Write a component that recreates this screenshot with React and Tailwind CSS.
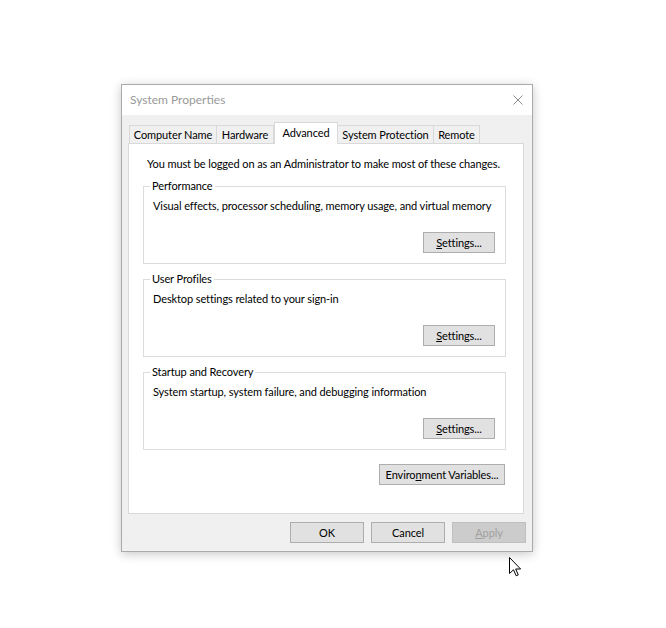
import React from "react";

const font = { fontFamily: 'Lato, "Noto Sans", sans-serif' };
const txt = "text-[11px] tracking-[-0.1px] text-black whitespace-nowrap";

function Btn({ children, className = "", disabled = false }) {
  return (
    <div
      className={
        "flex items-center justify-center h-[21px] border text-[11px] tracking-[-0.1px] leading-none whitespace-nowrap " +
        (disabled
          ? "bg-[#cccccc] border-[#bfbfbf] text-[#a0a0a0] "
          : "bg-[#e1e1e1] border-[#adadad] text-black ") +
        className
      }
    >
      {children}
    </div>
  );
}

function Group({ title, desc }) {
  return (
    <div className="relative mx-[14px] w-[363px] h-[78px] border border-[#dcdcdc] mt-[15px] first:mt-0">
      <div className={`absolute left-[6px] top-[-9px] bg-white px-[2px] leading-[16px] ${txt}`}>
        {title}
      </div>
      <div className={`pl-[9px] pt-[11px] leading-[16px] ${txt}`}>{desc}</div>
      <div className="absolute right-[10px] bottom-[10px]">
        <Btn className="w-[72px]">
          <span>
            <span className="underline">S</span>ettings...
          </span>
        </Btn>
      </div>
    </div>
  );
}

function Tab({ label, w, selected = false, first = false }) {
  if (selected) {
    return (
      <div
        className={`relative z-10 -mb-px h-[22px] ${w} bg-white border border-b-0 border-[#d9d9d9] flex items-start justify-center pt-[2px] leading-[16px] ${txt}`}
      >
        {label}
      </div>
    );
  }
  return (
    <div
      className={`h-[18px] ${w} ${first ? "" : "-ml-px"} bg-[#f0f0f0] border border-b-0 border-[#d9d9d9] flex items-center justify-center leading-[16px] ${txt}`}
    >
      {label}
    </div>
  );
}

export default function App() {
  return (
    <div className="relative w-[666px] h-[628px] bg-white pt-[84px] pl-[121px]" style={font}>
      <div className="w-[412px] h-[468px] border border-[#aaaaaa] bg-[#f0f0f0] shadow-[0_2px_10px_rgba(0,0,0,0.22)] flex flex-col">
        {/* title bar */}
        <div className="h-[30px] bg-white flex items-center justify-between pl-[8px] pr-[9px]">
          <span className="text-[12px] leading-none text-[#999999] whitespace-nowrap">System Properties</span>
          <svg width="10" height="10" viewBox="0 0 10 10" className="block">
            <path d="M0.5 0.5 L9.5 9.5 M9.5 0.5 L0.5 9.5" stroke="#8a8a8a" strokeWidth="1" fill="none" />
          </svg>
        </div>
        {/* body */}
        <div className="pt-[7px] pl-[6px]">
          <div className="flex items-end pl-[1px]">
            <Tab label="Computer Name" w="w-[88px]" first />
            <Tab label="Hardware" w="w-[58px]" />
            <Tab label="Advanced" w="w-[64px]" selected />
            <Tab label="System Protection" w="w-[97px]" />
            <Tab label="Remote" w="w-[47px]" />
          </div>
          <div className="w-[396px] h-[371px] bg-white border border-[#d9d9d9] flex flex-col">
            <div className={`pl-[18px] pt-[12px] leading-[16px] ${txt}`}>
              You must be logged on as an Administrator to make most of these changes.
            </div>
            <div className="mt-[14px] flex flex-col">
              <Group title="Performance" desc="Visual effects, processor scheduling, memory usage, and virtual memory" />
              <Group title="User Profiles" desc="Desktop settings related to your sign-in" />
              <Group title="Startup and Recovery" desc="System startup, system failure, and debugging information" />
            </div>
            <div className="flex justify-end pr-[18px] mt-[14px]">
              <Btn className="w-[126px]">
                <span>
                  Enviro<span className="underline">n</span>ment Variables...
                </span>
              </Btn>
            </div>
          </div>
          <div className="flex justify-end gap-[7px] pr-[6px] mt-[8px]">
            <Btn className="w-[74px]">OK</Btn>
            <Btn className="w-[74px]">Cancel</Btn>
            <Btn className="w-[74px]" disabled>
              <span>
                <span className="underline">A</span>pply
              </span>
            </Btn>
          </div>
        </div>
      </div>
      {/* mouse cursor */}
      <svg
        className="absolute left-[509px] top-[557px]"
        width="13"
        height="20"
        viewBox="0 0 13 20"
      >
        <path
          d="M0.5 0.5 L0.5 16.5 L4.5 12.8 L7.2 18.8 L9.3 17.9 L6.7 12 L11.6 12 Z"
          fill="white"
          stroke="black"
          strokeWidth="1"
          strokeLinejoin="miter"
        />
      </svg>
    </div>
  );
}
